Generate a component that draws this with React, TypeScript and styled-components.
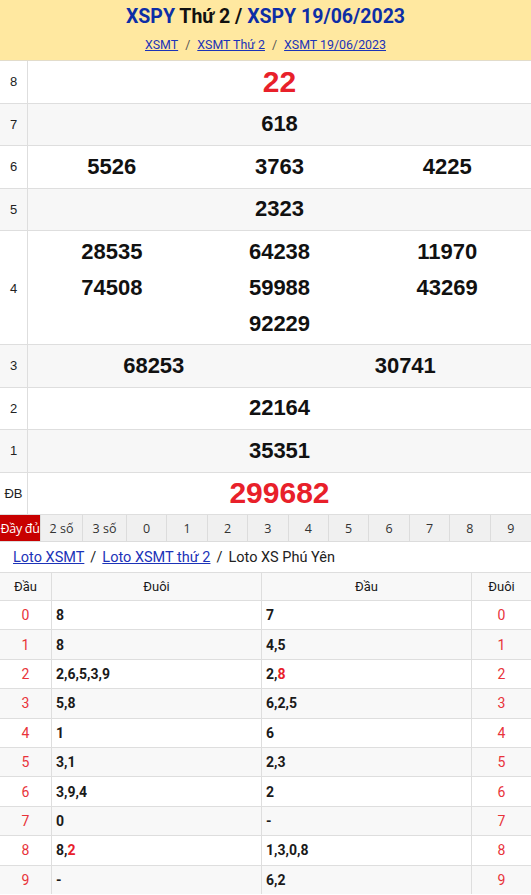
import React from "react";
import styled, { createGlobalStyle } from "styled-components";

const Global = createGlobalStyle`
  html, body { margin: 0; padding: 0; background: #fff; }
  body { font-family: Roboto, "Noto Sans", Arial, sans-serif; color: #222; }
  * { box-sizing: border-box; }
`;

const Page = styled.div`
  width: 531px;
`;

const Header = styled.div`
  background: #ffe8a0;
  height: 61px;
  display: flex;
  flex-direction: column;
  align-items: center;
  padding-top: 5px;
  border-bottom: 1px solid #e2dccb;
`;

const Title = styled.h1`
  margin: 0;
  font-family: Roboto, sans-serif;
  font-size: 19.5px;
  font-weight: 700;
  line-height: 24px;
  color: #111;
`;

const TitleLink = styled.span`
  color: #0d2ea6;
`;

const Crumbs = styled.div`
  margin-top: 8px;
  font-family: Roboto, sans-serif;
  font-size: 12.4px;
  line-height: 16px;
  color: #555;
  display: flex;
  gap: 7px;
`;

const CrumbLink = styled.a`
  color: #1c33b8;
  text-decoration: underline;
`;

const PrizeRow = styled.div<{ $alt?: boolean; $h?: number }>`
  display: grid;
  grid-template-columns: 28px 1fr;
  height: ${(p) => p.$h ?? 42.5}px;
  background: ${(p) => (p.$alt ? "#f7f7f7" : "#fff")};
  border-bottom: 1px solid #dedede;
`;

const Label = styled.div`
  border-right: 1px solid #dedede;
  display: flex;
  align-items: center;
  justify-content: center;
  font-family: "Liberation Sans", Arial, sans-serif;
  font-size: 13px;
  color: #222;
`;

const Nums = styled.div<{ $pad?: number }>`
  display: flex;
  flex-wrap: wrap;
  justify-content: center;
  align-items: center;
  align-content: center;
  padding: ${(p) => p.$pad ?? 0}px 0;
`;

const Num = styled.div<{ $cols: number; $red?: boolean; $big?: boolean }>`
  width: ${(p) => 100 / p.$cols}%;
  text-align: center;
  font-family: "Liberation Sans", Arial, sans-serif;
  font-weight: 700;
  font-size: ${(p) => (p.$big ? 30 : 22)}px;
  line-height: 36px;
  color: ${(p) => (p.$red ? "#e8202a" : "#111")};
`;

const Tabs = styled.div`
  display: grid;
  grid-template-columns: 41px 42px 44px repeat(10, 1fr);
  height: 27px;
  background: #f0f0f0;
  border-bottom: 1px solid #dcdcdc;
`;

const Tab = styled.div<{ $active?: boolean }>`
  display: flex;
  align-items: center;
  justify-content: center;
  font-family: "Open Sans", "Noto Sans", sans-serif;
  font-size: 12.5px;
  color: ${(p) => (p.$active ? "#fff" : "#333")};
  background: ${(p) => (p.$active ? "#c80000" : "transparent")};
  border-right: 1px solid #dcdcdc;
  letter-spacing: ${(p) => (p.$active ? "-0.3px" : "0")};
  &:last-child { border-right: none; }
`;

const LotoCrumbs = styled.div`
  height: 30px;
  display: flex;
  align-items: center;
  gap: 6px;
  padding-left: 13px;
  font-family: Roboto, sans-serif;
  font-size: 14.5px;
  color: #222;
`;

const LotoLink = styled.a`
  color: #1c33b8;
  text-decoration: underline;
`;

const LotoRow = styled.div<{ $alt?: boolean; $h?: number }>`
  display: grid;
  grid-template-columns: 52px 210px 210px 1fr;
  height: ${(p) => p.$h ?? 29.4}px;
  background: ${(p) => (p.$alt ? "#f8f8f8" : "#fff")};
  border-top: 1px solid #dedede;
  font-family: Roboto, sans-serif;
  font-size: ${(p) => (p.$h ? 13 : 14)}px;
`;

const Cell = styled.div<{ $center?: boolean; $red?: boolean; $bold?: boolean }>`
  display: flex;
  align-items: center;
  justify-content: ${(p) => (p.$center ? "center" : "flex-start")};
  padding-left: ${(p) => (p.$center ? 0 : 4)}px;
  color: ${(p) => (p.$red ? "#e8333a" : "#1a1a1a")};
  font-weight: ${(p) => (p.$bold ? 700 : 400)};
  border-right: 1px solid #dedede;
  &:last-child { border-right: none; }
`;

const Red = styled.span`
  color: #e8202a;
`;

const prizes: { label: string; nums: string[]; cols: number; red?: boolean; big?: boolean }[] = [
  { label: "8", nums: ["22"], cols: 1, red: true, big: true },
  { label: "7", nums: ["618"], cols: 1 },
  { label: "6", nums: ["5526", "3763", "4225"], cols: 3 },
  { label: "5", nums: ["2323"], cols: 1 },
  { label: "4", nums: ["28535", "64238", "11970", "74508", "59988", "43269", "92229"], cols: 3 },
  { label: "3", nums: ["68253", "30741"], cols: 2 },
  { label: "2", nums: ["22164"], cols: 1 },
  { label: "1", nums: ["35351"], cols: 1 },
  { label: "ĐB", nums: ["299682"], cols: 1, red: true, big: true },
];

const tabs = ["Đầy đủ", "2 số", "3 số", "0", "1", "2", "3", "4", "5", "6", "7", "8", "9"];

type Part = { t: string; r?: boolean };
const loto: { duoi: Part[]; dau: Part[] }[] = [
  { duoi: [{ t: "8" }], dau: [{ t: "7" }] },
  { duoi: [{ t: "8" }], dau: [{ t: "4,5" }] },
  { duoi: [{ t: "2,6,5,3,9" }], dau: [{ t: "2," }, { t: "8", r: true }] },
  { duoi: [{ t: "5,8" }], dau: [{ t: "6,2,5" }] },
  { duoi: [{ t: "1" }], dau: [{ t: "6" }] },
  { duoi: [{ t: "3,1" }], dau: [{ t: "2,3" }] },
  { duoi: [{ t: "3,9,4" }], dau: [{ t: "2" }] },
  { duoi: [{ t: "0" }], dau: [{ t: "-" }] },
  { duoi: [{ t: "8," }, { t: "2", r: true }], dau: [{ t: "1,3,0,8" }] },
  { duoi: [{ t: "-" }], dau: [{ t: "6,2" }] },
];

const renderParts = (parts: Part[]) =>
  parts.map((p, i) => (p.r ? <Red key={i}>{p.t}</Red> : <React.Fragment key={i}>{p.t}</React.Fragment>));

export default function App() {
  return (
    <Page>
      <Global />
      <Header>
        <Title>
          <TitleLink>XSPY</TitleLink> Thứ 2 / <TitleLink>XSPY 19/06/2023</TitleLink>
        </Title>
        <Crumbs>
          <CrumbLink>XSMT</CrumbLink>
          <span>/</span>
          <CrumbLink>XSMT Thứ 2</CrumbLink>
          <span>/</span>
          <CrumbLink>XSMT 19/06/2023</CrumbLink>
        </Crumbs>
      </Header>
      {prizes.map((p, i) => (
        <PrizeRow key={p.label} $alt={i % 2 === 1} $h={p.nums.length > 3 ? 114 : undefined}>
          <Label>{p.label}</Label>
          <Nums $pad={p.nums.length > 3 ? 3 : 0}>
            {p.nums.map((n) => (
              <Num key={n} $cols={p.cols} $red={p.red} $big={p.big}>
                {n}
              </Num>
            ))}
          </Nums>
        </PrizeRow>
      ))}
      <Tabs>
        {tabs.map((t, i) => (
          <Tab key={t + i} $active={i === 0}>
            {t}
          </Tab>
        ))}
      </Tabs>
      <LotoCrumbs>
        <LotoLink>Loto XSMT</LotoLink>
        <span>/</span>
        <LotoLink>Loto XSMT thứ 2</LotoLink>
        <span>/</span>
        <span>Loto XS Phú Yên</span>
      </LotoCrumbs>
      <LotoRow $alt $h={28}>
        <Cell $center>Đầu</Cell>
        <Cell $center>Đuôi</Cell>
        <Cell $center>Đầu</Cell>
        <Cell $center>Đuôi</Cell>
      </LotoRow>
      {loto.map((r, i) => (
        <LotoRow key={i} $alt={i % 2 === 1}>
          <Cell $center $red>{i}</Cell>
          <Cell $bold>{renderParts(r.duoi)}</Cell>
          <Cell $bold>{renderParts(r.dau)}</Cell>
          <Cell $center $red>{i}</Cell>
        </LotoRow>
      ))}
    </Page>
  );
}
